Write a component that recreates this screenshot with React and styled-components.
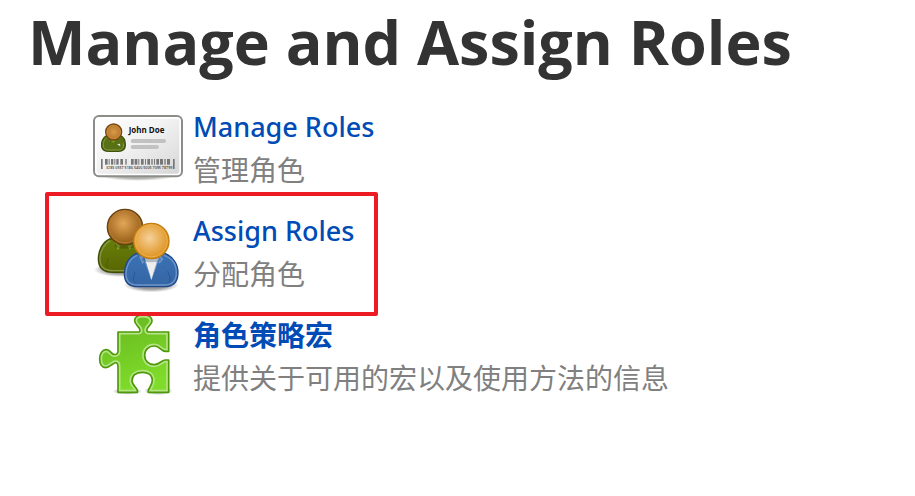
import React from "react";
import styled, { createGlobalStyle, css } from "styled-components";

const GlobalStyle = createGlobalStyle`
  *, *::before, *::after { box-sizing: border-box; }
  body {
    margin: 0;
    background: #fff;
    color: #333;
    font-family: "Noto Sans", "Noto Sans CJK SC", sans-serif;
  }
`;

const Page = styled.main`
  padding: 0 28px 48px;
`;

const Title = styled.h1`
  margin: 0 0 14px;
  font-family: "Open Sans", sans-serif;
  font-size: 61px;
  line-height: 84px;
  font-weight: 700;
`;

const RoleList = styled.ul`
  display: flex;
  flex-direction: column;
  gap: 8px;
  margin: 0;
  padding: 0 0 0 62px;
  list-style: none;
`;

const RoleItem = styled.li`
  position: relative;
  display: flex;
  gap: 7px;
  min-height: 96px;
  ${({ $highlighted }) =>
    $highlighted &&
    css`
      &::after {
        content: "";
        position: absolute;
        z-index: 1;
        top: -10px;
        left: -45px;
        width: 333px;
        height: 124px;
        border: 4px solid #ed1c24;
        border-radius: 2px;
        pointer-events: none;
      }
    `}
`;

const Icon = styled.svg`
  flex: none;
  width: 96px;
  height: 96px;
  overflow: visible;
`;

const RoleText = styled.div`
  padding-top: 8px;
  font-size: 28px;
  line-height: 42px;
`;

const RoleLink = styled.a`
  display: block;
  color: #004bb5;
  font-size: ${({ $strong }) => ($strong ? 28 : 27)}px;
  font-weight: ${({ $strong }) => ($strong ? 700 : 500)};
  text-decoration: none;
  &:hover { text-decoration: underline; }
`;

const Description = styled.p`
  margin: 0;
  color: #808080;
  font-family: "Noto Sans CJK SC", sans-serif;
  font-weight: 400;
`;

const bars = [
  [48, 5, 30], [60, 8, 17], [71, 3, 17], [78, 7, 17], [88, 3, 17], [94, 7, 17],
  [106, 8, 17], [121, 4, 17], [138, 8, 17], [149, 8, 17], [160, 3, 17],
  [168, 8, 17], [180, 3, 17], [187, 8, 17], [199, 4, 17], [207, 3, 17],
  [214, 8, 17], [225, 9, 17], [238, 4, 17], [246, 9, 17], [264, 5, 30],
];

const CardIcon = () => (
  <Icon viewBox="15 -30 288 288" aria-hidden="true">
    <defs>
      <linearGradient id="card" x1="0" y1="0" x2="1" y2="1">
        <stop offset="0" stopColor="#fff" />
        <stop offset="0.45" stopColor="#f2f2f2" />
        <stop offset="1" stopColor="#d6d6d6" />
      </linearGradient>
      <radialGradient id="cardHead">
        <stop offset="0" stopColor="#d99a4c" />
        <stop offset="1" stopColor="#b57425" />
      </radialGradient>
      <radialGradient id="cardShade">
        <stop offset="0.5" stopColor="#000" stopOpacity="0.3" />
        <stop offset="1" stopColor="#000" stopOpacity="0" />
      </radialGradient>
    </defs>
    <ellipse cx="158" cy="204" rx="112" ry="15" fill="url(#cardShade)" />
    <rect x="27" y="24" width="264" height="181" rx="15" fill="#fff" stroke="#8b8d89" strokeWidth="6" />
    <rect x="35" y="32" width="248" height="165" rx="7" fill="url(#card)" />
    <path d="M65 83C53 88 48 104 50 116C52 127 60 130 72 130H100C113 130 121 124 121 111C121 99 116 87 106 83Z" fill="#587016" stroke="#3f5208" strokeWidth="4" />
    <path d="M65 90C56 96 53 108 56 118C59 126 66 126 76 126H98C111 126 117 119 115 106" fill="none" stroke="#879d45" strokeWidth="3" />
    <path d="M78 97L85 105L92 97Z" fill="#81a719" />
    <path d="M97 110Q101 106 105 108L106 114Z" fill="#e6edcf" />
    <circle cx="86" cy="72" r="24" fill="url(#cardHead)" stroke="#754711" strokeWidth="4" />
    <circle cx="86" cy="72" r="20" fill="none" stroke="#c68b42" strokeWidth="3" />
    <text x="131" y="74" fontFamily="Open Sans, sans-serif" fontSize="24" fontWeight="700" fill="#111">John Doe</text>
    <rect x="137" y="93" width="106" height="12" rx="6" fill="#c2c2c2" />
    <rect x="137" y="111" width="85" height="12" rx="6" fill="#c2c2c2" />
    {bars.map(([x, width, height]) => (
      <rect key={x} x={x} y="153" width={width} height={height} fill="#777" />
    ))}
    <text x="63" y="182" fontFamily="Open Sans, sans-serif" fontSize="11" fontWeight="600" fill="#444">3285 0557 5186 5400 5005 7095 78799</text>
  </Icon>
);

const PeopleIcon = () => (
  <Icon viewBox="0 6 288 288" aria-hidden="true">
    <defs>
      <radialGradient id="brownHead" cx="0.45" cy="0.4" r="0.55">
        <stop offset="0" stopColor="#e2a657" />
        <stop offset="1" stopColor="#996019" />
      </radialGradient>
      <radialGradient id="goldHead" cx="0.45" cy="0.42" r="0.55">
        <stop offset="0" stopColor="#f5d19a" />
        <stop offset="1" stopColor="#df9422" />
      </radialGradient>
      <linearGradient id="greenBody" x1="0" y1="0" x2="0" y2="1">
        <stop offset="0" stopColor="#66800a" />
        <stop offset="1" stopColor="#596602" />
      </linearGradient>
      <linearGradient id="blueBody" x1="0" y1="0" x2="0" y2="1">
        <stop offset="0" stopColor="#3a72b6" />
        <stop offset="1" stopColor="#3565a4" />
      </linearGradient>
      <radialGradient id="peopleShade">
        <stop offset="0.55" stopColor="#000" stopOpacity="0.4" />
        <stop offset="1" stopColor="#000" stopOpacity="0" />
      </radialGradient>
    </defs>
    <ellipse cx="94" cy="209" rx="82" ry="22" fill="url(#peopleShade)" />
    <path d="M58 117C37 127 25 152 25 177C25 206 43 217 69 217H145C166 211 169 135 130 114Z" fill="url(#greenBody)" stroke="#3e4c05" strokeWidth="4" />
    <path d="M61 122C42 132 30 155 30 177C30 202 46 212 69 212H144C160 207 163 143 128 119" fill="none" stroke="#859545" strokeWidth="4" />
    <path d="M56 175Q45 194 54 205" fill="none" stroke="#4f5d02" strokeWidth="3" />
    <path d="M77 128L83 151L92 138M128 134L119 149L112 137" fill="#92aa35" />
    <ellipse cx="106" cy="137" rx="33" ry="9" fill="#303a04" opacity="0.35" />
    <circle cx="105" cy="81" r="53" fill="url(#brownHead)" stroke="#68410d" strokeWidth="4" />
    <circle cx="105" cy="81" r="48" fill="none" stroke="#b67d35" strokeWidth="3" />
    <ellipse cx="184" cy="255" rx="82" ry="22" fill="url(#peopleShade)" />
    <path d="M139 161C114 171 103 197 103 221C103 248 119 260 144 260H222C249 260 264 246 264 218C264 192 249 170 225 160Z" fill="url(#blueBody)" stroke="#204a87" strokeWidth="4" />
    <path d="M142 166C119 175 108 199 108 221C108 244 121 255 144 255H222C245 255 259 243 259 218C259 194 246 174 222 166" fill="none" stroke="#6e95c9" strokeWidth="4" />
    <path d="M135 217Q125 237 135 248M232 214Q246 236 237 247" fill="none" stroke="#2b568f" strokeWidth="3" />
    <path d="M164 175L184 240L207 175Z" fill="#eeeeec" />
    <path d="M158 168L147 170L158 193L165 180L184 238L159 173ZM211 166L220 178L209 191L202 180L184 238L208 173Z" fill="#6d96cc" />
    <ellipse cx="184" cy="179" rx="30" ry="8" fill="#173863" opacity="0.28" />
    <circle cx="184" cy="123" r="53" fill="url(#goldHead)" stroke="#c17d11" strokeWidth="4" />
    <circle cx="184" cy="123" r="48" fill="none" stroke="#efae48" strokeWidth="3" />
  </Icon>
);

const puzzlePath =
  "M84 72H145C151 72 151 66 148 61C142 52 134 47 134 38C134 26 145 21 159 21C174 21 186 27 186 39C186 48 177 52 172 61C169 67 170 72 177 72H236V130H226C214 130 210 114 193 114C176 114 164 125 164 142C164 159 176 170 193 170C210 170 214 156 226 156H236V253H175C171 243 187 236 187 217C187 200 173 193 157 193C139 193 126 202 126 218C126 235 147 241 142 253H84V175C84 164 78 162 70 167C61 172 58 179 47 179C35 179 29 167 29 153C29 137 37 125 49 125C61 125 62 137 71 139C80 141 84 136 84 128Z";

const PuzzleIcon = () => (
  <Icon viewBox="0 -6 288 288" aria-hidden="true">
    <defs>
      <linearGradient id="puzzle" x1="0" y1="0" x2="0.3" y2="1">
        <stop offset="0" stopColor="#66b51e" />
        <stop offset="1" stopColor="#7fdc2a" />
      </linearGradient>
      <radialGradient id="puzzleShade">
        <stop offset="0.4" stopColor="#000" stopOpacity="0.4" />
        <stop offset="1" stopColor="#000" stopOpacity="0" />
      </radialGradient>
      <clipPath id="puzzleClip"><path d={puzzlePath} /></clipPath>
    </defs>
    <ellipse cx="112" cy="250" rx="44" ry="10" fill="url(#puzzleShade)" />
    <ellipse cx="205" cy="248" rx="43" ry="13" fill="url(#puzzleShade)" />
    <path d={puzzlePath} fill="url(#puzzle)" />
    <g clipPath="url(#puzzleClip)">
      <path d={puzzlePath} fill="none" stroke="#b5e488" strokeWidth="15" />
    </g>
    <path d={puzzlePath} fill="none" stroke="#4e9a06" strokeWidth="5" strokeLinejoin="round" />
  </Icon>
);

const roles = [
  { title: "Manage Roles", description: "管理角色", Drawing: CardIcon },
  { title: "Assign Roles", description: "分配角色", Drawing: PeopleIcon, highlighted: true },
  { title: "角色策略宏", description: "提供关于可用的宏以及使用方法的信息", Drawing: PuzzleIcon, strong: true },
];

export default function App() {
  return (
    <>
      <GlobalStyle />
      <Page>
        <Title>Manage and Assign Roles</Title>
        <RoleList>
          {roles.map(({ title, description, Drawing, highlighted, strong }) => (
            <RoleItem key={title} $highlighted={highlighted}>
              <Drawing />
              <RoleText>
                <RoleLink href="#" $strong={strong}>{title}</RoleLink>
                <Description>{description}</Description>
              </RoleText>
            </RoleItem>
          ))}
        </RoleList>
      </Page>
    </>
  );
}
